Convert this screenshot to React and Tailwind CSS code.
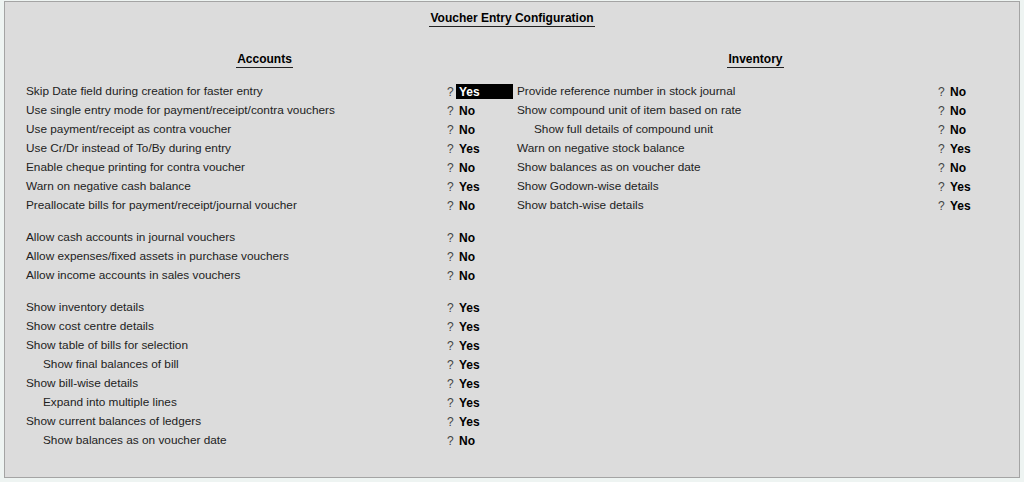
import React from "react";

const accounts = [
  [
    { label: "Skip Date field during creation for faster entry", value: "Yes", hl: true },
    { label: "Use single entry mode for payment/receipt/contra vouchers", value: "No" },
    { label: "Use payment/receipt as contra voucher", value: "No" },
    { label: "Use Cr/Dr instead of To/By during entry", value: "Yes" },
    { label: "Enable cheque printing for contra voucher", value: "No" },
    { label: "Warn on negative cash balance", value: "Yes" },
    { label: "Preallocate bills for payment/receipt/journal voucher", value: "No" },
  ],
  [
    { label: "Allow cash accounts in journal vouchers", value: "No" },
    { label: "Allow expenses/fixed assets in purchase vouchers", value: "No" },
    { label: "Allow income accounts in sales vouchers", value: "No" },
  ],
  [
    { label: "Show inventory details", value: "Yes" },
    { label: "Show cost centre details", value: "Yes" },
    { label: "Show table of bills for selection", value: "Yes" },
    { label: "Show final balances of bill", value: "Yes", indent: true },
    { label: "Show bill-wise details", value: "Yes" },
    { label: "Expand into multiple lines", value: "Yes", indent: true },
    { label: "Show current balances of ledgers", value: "Yes" },
    { label: "Show balances as on voucher date", value: "No", indent: true },
  ],
];

const inventory = [
  [
    { label: "Provide reference number in stock journal", value: "No" },
    { label: "Show compound unit of item based on rate", value: "No" },
    { label: "Show full details of compound unit", value: "No", indent: true },
    { label: "Warn on negative stock balance", value: "Yes" },
    { label: "Show balances as on voucher date", value: "No" },
    { label: "Show Godown-wise details", value: "Yes" },
    { label: "Show batch-wise details", value: "Yes" },
  ],
];

function Row({ label, value, indent, hl }) {
  return (
    <div className="flex h-[19px] items-center">
      <div className={`w-[421px] pt-[1px] text-[11.8px] text-[#222] ${indent ? "pl-[17px]" : ""}`}>
        {label}
      </div>
      <div className="w-[9px] pt-[1px] text-[#444]">?</div>
      <div className="w-[57px]">
        <span
          className={`block h-[15px] pt-[1px] pl-[3px] leading-[14px] font-bold ${
            hl ? "bg-black text-white" : "text-black"
          }`}
        >
          {value}
        </span>
      </div>
    </div>
  );
}

function Section({ title, groups }) {
  return (
    <div className="flex w-[487px] flex-col">
      <div className="flex w-[477px] justify-center">
        <span className="border-b border-[#222] px-[1px] leading-[16px] font-bold text-black">
          {title}
        </span>
      </div>
      <div className="mt-[14px] flex flex-col gap-[13px]">
        {groups.map((group, gi) => (
          <div key={gi} className="flex flex-col">
            {group.map((row, ri) => (
              <Row key={ri} {...row} />
            ))}
          </div>
        ))}
      </div>
    </div>
  );
}

export default function App() {
  return (
    <div
      className="h-[482px] w-[1024px] bg-[#eef4f2] pt-[1px] pl-[4px] text-[12px]"
      style={{ fontFamily: '"Liberation Sans", Arial, sans-serif' }}
    >
      <div className="h-[477px] w-[1016px] border border-[#a4a4a4] bg-[#dcdcdc]">
        <div className="flex justify-center pt-[8px]">
          <span className="border-b border-[#222] px-[1px] leading-[16px] font-bold text-black">
            Voucher Entry Configuration
          </span>
        </div>
        <div className="mt-[24px] flex gap-[4px] pl-[21px]">
          <Section title="Accounts" groups={accounts} />
          <Section title="Inventory" groups={inventory} />
        </div>
      </div>
    </div>
  );
}
